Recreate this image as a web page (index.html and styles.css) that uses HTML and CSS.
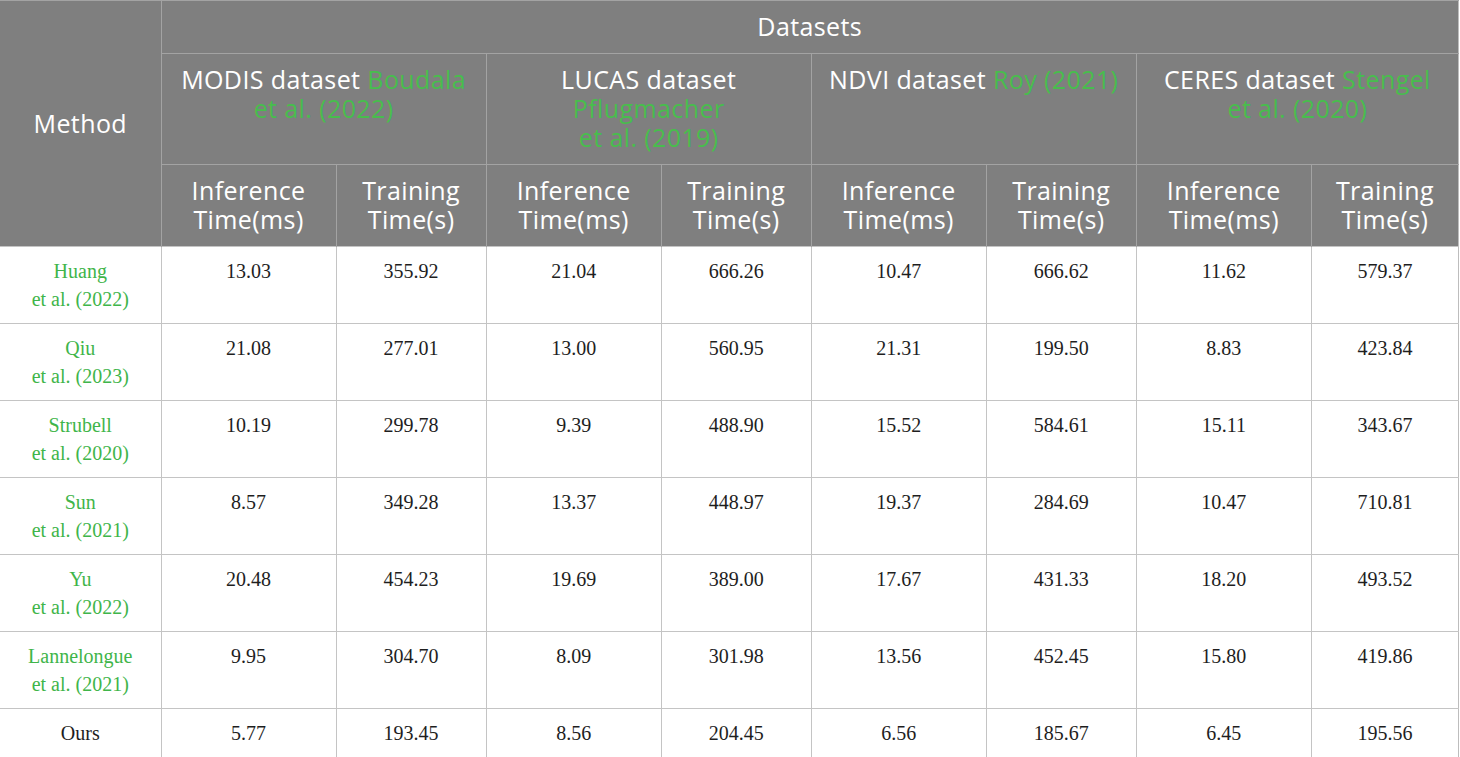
FILE: index.html
```html
<!DOCTYPE html>
<html>
<head>
<meta charset="utf-8">
<link rel="stylesheet" href="styles.css">
</head>
<body>
<table class="tbl">
  <colgroup>
    <col class="c-method">
    <col class="c-inf"><col class="c-tr">
    <col class="c-inf"><col class="c-tr">
    <col class="c-inf"><col class="c-tr">
    <col class="c-inf"><col class="c-tr2">
  </colgroup>
  <thead>
    <tr class="h1">
      <th rowspan="3" class="method">Method</th>
      <th colspan="8">Datasets</th>
    </tr>
    <tr class="h2">
      <th colspan="2">MODIS dataset <span class="cite">Boudala</span><br><span class="cite">et al. (2022)</span></th>
      <th colspan="2">LUCAS dataset<br><span class="cite">Pflugmacher</span><br><span class="cite">et al. (2019)</span></th>
      <th colspan="2">NDVI dataset <span class="cite">Roy (2021)</span></th>
      <th colspan="2">CERES dataset <span class="cite">Stengel</span><br><span class="cite">et al. (2020)</span></th>
    </tr>
    <tr class="h3">
      <th>Inference<br>Time(ms)</th><th>Training<br>Time(s)</th>
      <th>Inference<br>Time(ms)</th><th>Training<br>Time(s)</th>
      <th>Inference<br>Time(ms)</th><th>Training<br>Time(s)</th>
      <th>Inference<br>Time(ms)</th><th>Training<br>Time(s)</th>
    </tr>
  </thead>
  <tbody>
    <tr><td class="cite">Huang<br>et al. (2022)</td><td>13.03</td><td>355.92</td><td>21.04</td><td>666.26</td><td>10.47</td><td>666.62</td><td>11.62</td><td>579.37</td></tr>
    <tr><td class="cite">Qiu<br>et al. (2023)</td><td>21.08</td><td>277.01</td><td>13.00</td><td>560.95</td><td>21.31</td><td>199.50</td><td>8.83</td><td>423.84</td></tr>
    <tr><td class="cite">Strubell<br>et al. (2020)</td><td>10.19</td><td>299.78</td><td>9.39</td><td>488.90</td><td>15.52</td><td>584.61</td><td>15.11</td><td>343.67</td></tr>
    <tr><td class="cite">Sun<br>et al. (2021)</td><td>8.57</td><td>349.28</td><td>13.37</td><td>448.97</td><td>19.37</td><td>284.69</td><td>10.47</td><td>710.81</td></tr>
    <tr><td class="cite">Yu<br>et al. (2022)</td><td>20.48</td><td>454.23</td><td>19.69</td><td>389.00</td><td>17.67</td><td>431.33</td><td>18.20</td><td>493.52</td></tr>
    <tr><td class="cite">Lannelongue<br>et al. (2021)</td><td>9.95</td><td>304.70</td><td>8.09</td><td>301.98</td><td>13.56</td><td>452.45</td><td>15.80</td><td>419.86</td></tr>
    <tr><td>Ours</td><td>5.77</td><td>193.45</td><td>8.56</td><td>204.45</td><td>6.56</td><td>185.67</td><td>6.45</td><td>195.56</td></tr>
  </tbody>
</table>
</body>
</html>
```
FILE: styles.css
```css
html, body {
  margin: 0;
  padding: 0;
  background: #ffffff;
}

.tbl {
  border-collapse: collapse;
  table-layout: fixed;
  width: 1459px;
  border-top: 1px solid #bdbdbd;
  border-right: 1px solid #bdbdbd;
  border-bottom: 1px solid #bdbdbd;
}

.c-method { width: 161px; }
.c-inf { width: 175px; }
.c-tr { width: 150px; }
.c-tr2 { width: 147px; }

.tbl th {
  background: #7f7f7f;
  color: #ffffff;
  font-family: "Open Sans", "DejaVu Sans", sans-serif;
  font-weight: 400;
  font-size: 25px;
  letter-spacing: 0.4px;
  line-height: 29px;
  text-align: center;
  vertical-align: top;
  padding: 11px 4px 12px;
  border-left: 1px solid #a3a3a3;
  border-top: 1px solid #a3a3a3;
}

.tbl th.method {
  vertical-align: middle;
  border-left: none;
}

.tbl .h3 th {
  vertical-align: middle;
  padding: 11px 4px 12px;
}

.tbl th .cite {
  color: #48bd4d;
}

.tbl td {
  font-family: "Liberation Serif", "Times New Roman", serif;
  font-size: 20px;
  line-height: 28px;
  color: #1e1e1e;
  text-align: center;
  vertical-align: top;
  padding: 10px 4px 10px;
  border-left: 1px solid #c4c4c4;
  border-top: 1px solid #c4c4c4;
}

.tbl td:first-child {
  border-left: none;
}

.tbl td.cite {
  color: #3fb54a;
}
```
